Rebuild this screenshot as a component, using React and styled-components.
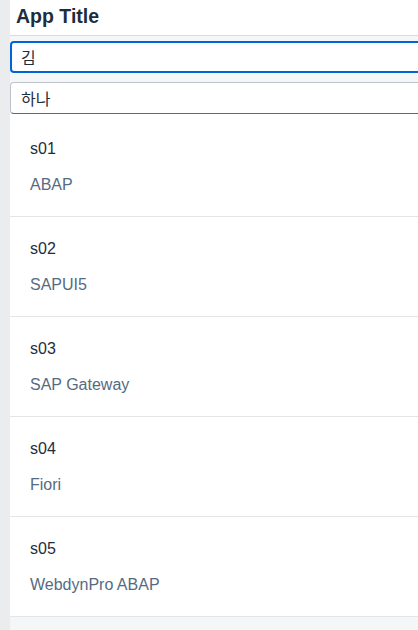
import React from 'react';
import styled, { createGlobalStyle } from 'styled-components';

const GlobalStyle = createGlobalStyle`
    html, body {
        margin: 0;
        padding: 0;
        background: #eaecee;
        overflow: hidden;
    }
    body {
        font-family: "Liberation Sans", Arial, "Noto Sans CJK KR", sans-serif;
    }
`;

const Shell = styled.div`
    margin-left: 10px;
    min-height: 630px;
    background: #f5f6f7;
    overflow: hidden;
`;

const Header = styled.header`
    height: 36px;
    box-sizing: border-box;
    background: #ffffff;
    border-bottom: 1px solid #d9dcdf;
    padding-left: 6px;
    display: flex;
    align-items: center;
`;

const Title = styled.h1`
    margin: 0;
    font-size: 19.5px;
    font-weight: bold;
    color: #1d2d3e;
    margin-top: -3px;
`;

const SearchBar = styled.div`
    display: flex;
    flex-direction: column;
    gap: 9px;
    padding: 5px 0 0;
`;

const Field = styled.input`
    height: 32px;
    box-sizing: border-box;
    width: calc(100% + 12px);
    margin: 0;
    padding: 0 9px;
    border-radius: 4px;
    background: #ffffff;
    font-family: "Noto Sans CJK KR", "Liberation Sans", sans-serif;
    font-size: 16px;
    color: #1d2d3e;
    outline: none;
    border: ${p => (p.$focused ? '2px solid #0064d9' : '1px solid #bcc3ca')};
    border-bottom-color: ${p => (p.$focused ? '#0064d9' : '#556b82')};
    padding-left: ${p => (p.$focused ? '9px' : '10px')};
`;

const List = styled.ul`
    list-style: none;
    margin: 0;
    padding: 3px 0 0;
    background: #ffffff;
`;

const Item = styled.li`
    height: 100px;
    box-sizing: border-box;
    padding: 23px 20px 0;
    border-bottom: 1px solid #e5e5e5;
    display: flex;
    flex-direction: column;
    gap: 18px;
`;

const ItemTitle = styled.span`
    font-size: 16px;
    line-height: 18px;
    color: #1d2d3e;
`;

const ItemDesc = styled.span`
    font-size: 16px;
    line-height: 18px;
    color: #556b82;
`;

const skills = [
    { id: 's01', name: 'ABAP' },
    { id: 's02', name: 'SAPUI5' },
    { id: 's03', name: 'SAP Gateway' },
    { id: 's04', name: 'Fiori' },
    { id: 's05', name: 'WebdynPro ABAP' },
];

function App() {
    return (
        <>
            <GlobalStyle />
            <Shell>
                <Header>
                    <Title>App Title</Title>
                </Header>
                <SearchBar>
                    <Field $focused defaultValue="김" />
                    <Field defaultValue="하나" />
                </SearchBar>
                <List>
                    {skills.map(s => (
                        <Item key={s.id}>
                            <ItemTitle>{s.id}</ItemTitle>
                            <ItemDesc>{s.name}</ItemDesc>
                        </Item>
                    ))}
                </List>
            </Shell>
        </>
    );
}

export default App;
